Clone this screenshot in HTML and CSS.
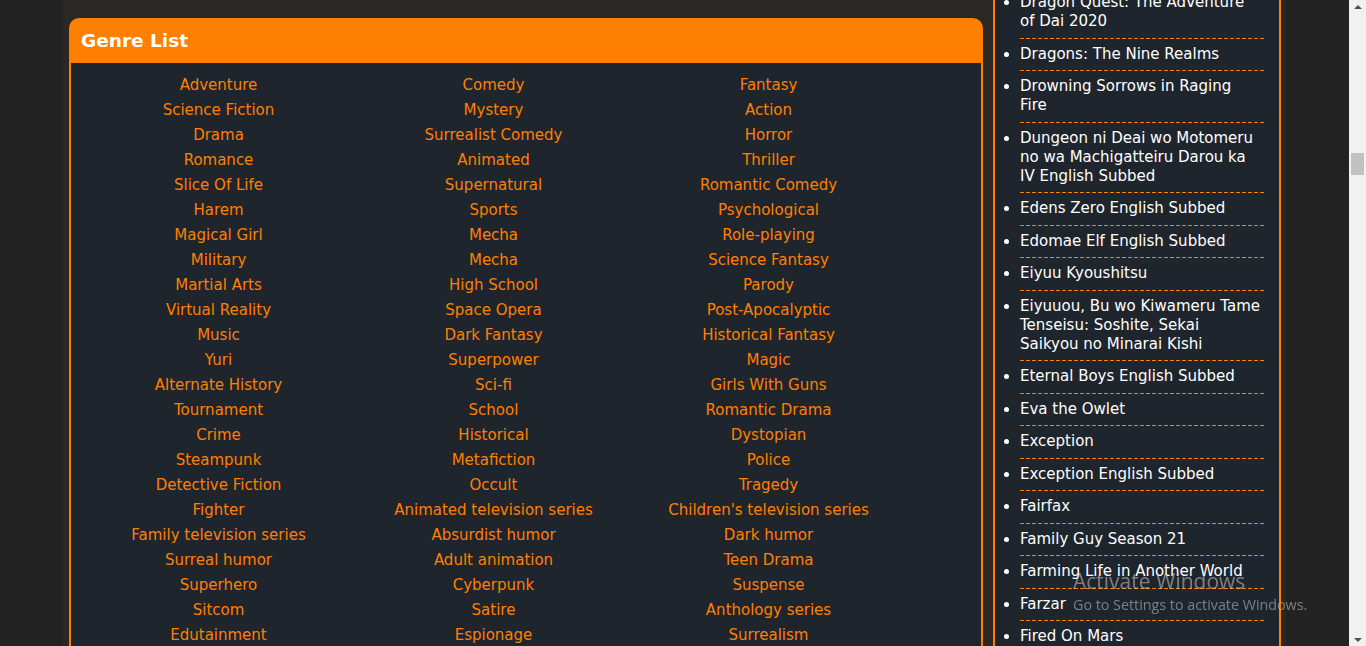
FILE: index.html
```html
<!DOCTYPE html>
<html lang="en">
<head>
<meta charset="utf-8">
<title>Genre List</title>
<link rel="stylesheet" href="styles.css">
</head>
<body>
<div class="page">
  <div class="viewport">
    <div class="wrap">
      <section class="genre-box">
        <h2 class="genre-head">Genre List</h2>
        <div class="genre-body">
          <a>Adventure</a><a>Comedy</a><a>Fantasy</a>
          <a>Science Fiction</a><a>Mystery</a><a>Action</a>
          <a>Drama</a><a>Surrealist Comedy</a><a>Horror</a>
          <a>Romance</a><a>Animated</a><a>Thriller</a>
          <a>Slice Of Life</a><a>Supernatural</a><a>Romantic Comedy</a>
          <a>Harem</a><a>Sports</a><a>Psychological</a>
          <a>Magical Girl</a><a>Mecha</a><a>Role-playing</a>
          <a>Military</a><a>Mecha</a><a>Science Fantasy</a>
          <a>Martial Arts</a><a>High School</a><a>Parody</a>
          <a>Virtual Reality</a><a>Space Opera</a><a>Post-Apocalyptic</a>
          <a>Music</a><a>Dark Fantasy</a><a>Historical Fantasy</a>
          <a>Yuri</a><a>Superpower</a><a>Magic</a>
          <a>Alternate History</a><a>Sci-fi</a><a>Girls With Guns</a>
          <a>Tournament</a><a>School</a><a>Romantic Drama</a>
          <a>Crime</a><a>Historical</a><a>Dystopian</a>
          <a>Steampunk</a><a>Metafiction</a><a>Police</a>
          <a>Detective Fiction</a><a>Occult</a><a>Tragedy</a>
          <a>Fighter</a><a>Animated television series</a><a>Children's television series</a>
          <a>Family television series</a><a>Absurdist humor</a><a>Dark humor</a>
          <a>Surreal humor</a><a>Adult animation</a><a>Teen Drama</a>
          <a>Superhero</a><a>Cyberpunk</a><a>Suspense</a>
          <a>Sitcom</a><a>Satire</a><a>Anthology series</a>
          <a>Edutainment</a><a>Espionage</a><a>Surrealism</a>
        </div>
      </section>
      <aside class="side">
        <ul class="side-list">
          <li>Dragon Quest: The Adventure of Dai 2020</li>
          <li>Dragons: The Nine Realms</li>
          <li>Drowning Sorrows in Raging Fire</li>
          <li>Dungeon ni Deai wo Motomeru no wa Machigatteiru Darou ka IV English Subbed</li>
          <li>Edens Zero English Subbed</li>
          <li>Edomae Elf English Subbed</li>
          <li>Eiyuu Kyoushitsu</li>
          <li>Eiyuuou, Bu wo Kiwameru Tame Tenseisu: Soshite, Sekai Saikyou no Minarai Kishi</li>
          <li>Eternal Boys English Subbed</li>
          <li>Eva the Owlet</li>
          <li>Exception</li>
          <li>Exception English Subbed</li>
          <li>Fairfax</li>
          <li>Family Guy Season 21</li>
          <li>Farming Life in Another World</li>
          <li>Farzar</li>
          <li>Fired On Mars</li>
        </ul>
      </aside>
    </div>
  </div>
  <div class="scrollbar">
    <div class="sb-btn"><span class="arrow-up"></span></div>
    <div class="sb-track">
      <div class="sb-thumb"></div>
    </div>
    <div class="sb-btn"><span class="arrow-down"></span></div>
  </div>
</div>
<div class="watermark">
  <div class="wm-title">Activate Windows</div>
  <div class="wm-sub">Go to Settings to activate Windows.</div>
</div>
</body>
</html>
```
FILE: styles.css
```css
html, body {
  margin: 0;
  padding: 0;
  height: 646px;
  overflow: hidden;
}
body {
  background: #222222;
  font-family: "DejaVu Sans", Verdana, sans-serif;
  font-size: 15px;
}
.page {
  display: flex;
  height: 646px;
}
.viewport {
  flex: 1;
  display: flex;
  justify-content: center;
  overflow: hidden;
}
.wrap {
  width: 1223px;
  box-sizing: border-box;
  background: #2a2725;
  display: flex;
  align-items: flex-start;
  gap: 10px;
  padding: 18px 5px 0 6px;
}
.genre-box {
  width: 914px;
  flex: none;
}
.genre-head {
  margin: 0;
  height: 45px;
  line-height: 46px;
  background: #ff7f00;
  border-radius: 10px 10px 0 0;
  padding-left: 12px;
  color: #ffffff;
  font-size: 18.5px;
  font-weight: bold;
}
.genre-body {
  background: #1f252d;
  border: 2px solid #ff7f00;
  border-top: 0;
  display: grid;
  grid-template-columns: repeat(3, 275px);
  padding: 10px 0 20px 10px;
  line-height: 25px;
  text-align: center;
}
.genre-body a {
  color: #ff7f00;
  text-decoration: none;
  white-space: nowrap;
}
.side {
  width: 288px;
  flex: none;
  box-sizing: border-box;
  margin-top: -31px;
  background: #1f252d;
  border-left: 2px solid #ff7f00;
  border-right: 2px solid #ff7f00;
}
.side-list {
  margin: 0;
  padding: 0 13px 0 25px;
  list-style: disc;
  color: #ffffff;
  line-height: 19px;
}
.side-list li {
  padding: 6.25px 5px 6.25px 0;
  border-bottom: 1px solid transparent;
  background-image: linear-gradient(to right, #ff7f00 4px, transparent 4px);
  background-size: 6px 1px;
  background-repeat: repeat-x;
  background-position: left bottom;
  background-origin: border-box;
}
.scrollbar {
  width: 17px;
  flex: none;
  background: #f1f1f1;
  display: flex;
  flex-direction: column;
}
.sb-btn {
  height: 17px;
  display: flex;
  align-items: center;
  justify-content: center;
}
.arrow-up {
  width: 0;
  height: 0;
  border-left: 4px solid transparent;
  border-right: 4px solid transparent;
  border-bottom: 4px solid #505050;
  margin-top: -4px;
}
.arrow-down {
  width: 0;
  height: 0;
  border-left: 4px solid transparent;
  border-right: 4px solid transparent;
  border-top: 4px solid #505050;
  margin-top: 4px;
}
.sb-track {
  flex: 1;
  padding-top: 136px;
}
.sb-thumb {
  height: 22px;
  margin: 0 2px;
  background: #c1c1c1;
}
.watermark {
  position: fixed;
  left: 1073px;
  top: 567px;
  color: rgba(200, 200, 200, 0.55);
  font-family: "Open Sans", "Noto Sans", sans-serif;
  pointer-events: none;
}
.wm-title {
  font-size: 21px;
  line-height: 28px;
}
.wm-sub {
  font-size: 14.3px;
  line-height: 20px;
  margin-top: 0;
}
```
